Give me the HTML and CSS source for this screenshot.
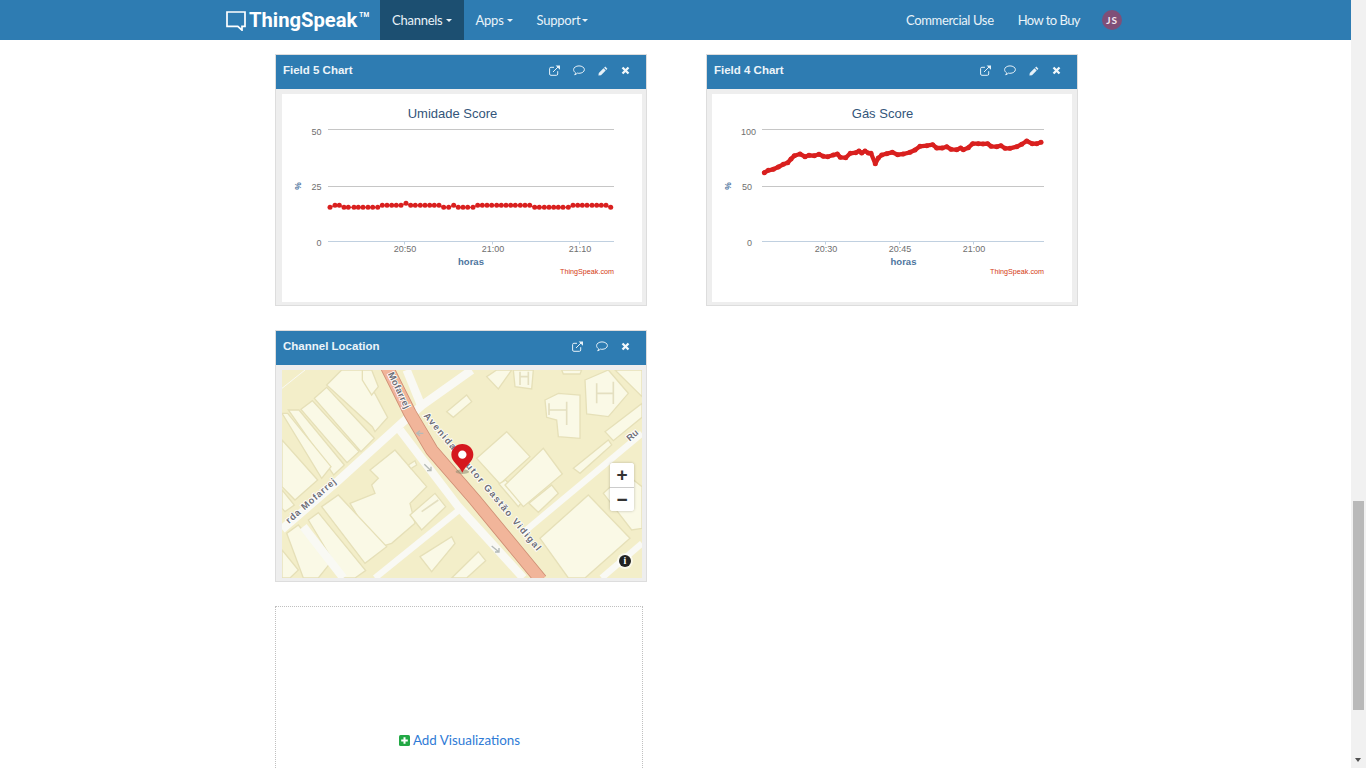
FILE: index.html
```html
<!DOCTYPE html>
<html lang="en">
<head>
<meta charset="utf-8">
<title>ThingSpeak</title>
<link rel="stylesheet" href="styles.css">
</head>
<body>
<svg class="defs" width="0" height="0" aria-hidden="true">
  <defs>
    <marker id="dot" markerUnits="userSpaceOnUse" markerWidth="6" markerHeight="6" refX="3" refY="3"><circle cx="3" cy="3" r="2.500" class="dot"/></marker>
    <symbol id="i-ext" viewBox="0 0 11 11"><path class="ico-s" d="M8.700 6.200V9a1.300 1.300 0 0 1-1.300 1.300H1.900A1.300 1.300 0 0 1 .6 9V3.600a1.300 1.300 0 0 1 1.300-1.300H5"/><path class="ico-s" d="M4 7 9.400 1.600"/><path class="ico-f" d="M6.600.4H11v4.400z"/></symbol>
    <symbol id="i-com" viewBox="0 0 12 11"><path class="ico-s" d="M6 .9c3 0 5.400 1.600 5.400 3.700S9 8.300 6 8.300c-.6 0-1.100 0-1.600-.2C3.500 9 2.500 9.700 1.700 9.800c.5-.6.9-1.300.9-2C1.300 7 .6 5.900.6 4.600.6 2.500 3 .9 6 .9z"/></symbol>
    <symbol id="i-pen" viewBox="0 0 10 10"><path class="ico-f" d="M7.200.6 9.400 2.800 8.300 3.900 6.100 1.700zM5.500 2.300 7.700 4.500 3 9.200.4 9.600.8 7z"/></symbol>
    <symbol id="i-x" viewBox="0 0 9 9"><path class="ico-x" d="M1.500 1.500 7.500 7.500M7.500 1.500 1.500 7.500"/></symbol>
  </defs>
</svg>
<div class="page">
  <header class="navbar">
    <a class="brand">
      <svg class="brand-mark" width="20" height="20" viewBox="0 0 20 20"><path d="M1 1H19V15.300H16V19.200L11.800 15.300H1Z"/></svg>
      <span class="brand-name">ThingSpeak</span><span class="brand-tm">TM</span>
    </a>
    <nav class="nav-left">
      <a class="nav-item active">Channels <i class="caret"></i></a>
      <a class="nav-item">Apps <i class="caret"></i></a>
      <a class="nav-item">Support<i class="caret caret-tight"></i></a>
    </nav>
    <nav class="nav-right">
      <a class="nav-link">Commercial Use</a>
      <a class="nav-link nav-link-tight">How to Buy</a>
      <span class="avatar">JS</span>
    </nav>
  </header>

  <main class="grid">
    <section class="panel">
      <div class="panel-head">
        <h3>Field 5 Chart</h3>
        <div class="tools">
          <svg class="t-ext"><use href="#i-ext"/></svg>
          <svg class="t-com"><use href="#i-com"/></svg>
          <svg class="t-pen"><use href="#i-pen"/></svg>
          <svg class="t-x"><use href="#i-x"/></svg>
        </div>
      </div>
      <div class="panel-body">
        <svg class="chart" viewBox="0 0 360 208">
          <text class="c-title" x="170.500" y="24">Umidade Score</text>
          <path class="grid-line" d="M46 35.500H332M46 92.500H332"/>
          <path class="axis-line" d="M46 147.500H332M122.500 147.500V150.500M210.500 147.500V150.500M297.500 147.500V150.500"/>
          <text class="y-lab" x="39.500" y="41">50</text>
          <text class="y-lab" x="39.500" y="96">25</text>
          <text class="y-lab" x="39.500" y="151.500">0</text>
          <text class="x-lab" x="123" y="158">20:50</text>
          <text class="x-lab" x="211" y="158">21:00</text>
          <text class="x-lab" x="298" y="158">21:10</text>
          <text class="ax-name" x="189" y="171">horas</text>
          <text class="ax-y" transform="translate(19 92) rotate(-90)">%</text>
          <text class="credit" x="332" y="180">ThingSpeak.com</text>
          <polyline class="series dotted" points="48,113.300 53,111.300 57.300,111.300 62,113.300 66.300,113.300 72,113.300 76.300,113.300 81,113.300 86,113.300 90.700,113.300 95.700,113.300 100.300,111.300 105,111.300 109.700,111.300 114.300,111.300 119,111.300 124,109.300 128.700,111.300 133.300,111.300 138.300,111.300 143,111.300 147.700,111.300 152.300,111.300 157,111.300 161.700,113.300 166.700,113.300 171.700,111.300 176.300,113.300 181,113.300 185.700,113.300 191,113.300 195.700,111.300 200.300,111.300 205,111.300 209.700,111.300 214.700,111.300 219.300,111.300 224,111.300 228.700,111.300 233.300,111.300 238.300,111.300 243,111.300 247.700,111.300 252.700,113.300 257.300,113.300 262.300,113.300 267,113.300 271.700,113.300 276.300,113.300 281,113.300 286.300,113.300 291,111.300 295.700,111.300 300.300,111.300 305,111.300 310,111.300 314.700,111.300 319.300,111.300 324,111.300 328.700,113.300"/>
        </svg>
      </div>
    </section>

    <section class="panel">
      <div class="panel-head">
        <h3>Field 4 Chart</h3>
        <div class="tools">
          <svg class="t-ext"><use href="#i-ext"/></svg>
          <svg class="t-com"><use href="#i-com"/></svg>
          <svg class="t-pen"><use href="#i-pen"/></svg>
          <svg class="t-x"><use href="#i-x"/></svg>
        </div>
      </div>
      <div class="panel-body panel-body-tight">
        <svg class="chart" viewBox="0 0 360 208">
          <text class="c-title" x="170.500" y="24">Gás Score</text>
          <path class="grid-line" d="M50 35.500H332M50 92.500H332"/>
          <path class="axis-line" d="M50 147.500H332M113.500 147.500V150.500M187.500 147.500V150.500M261.500 147.500V150.500"/>
          <text class="y-lab" x="44" y="41">100</text>
          <text class="y-lab" x="40" y="96">50</text>
          <text class="y-lab" x="40" y="151.500">0</text>
          <text class="x-lab" x="114" y="158">20:30</text>
          <text class="x-lab" x="188" y="158">20:45</text>
          <text class="x-lab" x="262" y="158">21:00</text>
          <text class="ax-name" x="191.500" y="171">horas</text>
          <text class="ax-y" transform="translate(19 92) rotate(-90)">%</text>
          <text class="credit" x="332" y="180">ThingSpeak.com</text>
          <polyline class="series thick" points="52.300,78.700 56.300,76.300 61.300,75.300 66.300,73 71.300,70.300 75.700,68.700 79,65 82.300,61.700 88,60 93,62.700 97,61.300 102.300,61.700 107,60.300 111.300,62.300 115.700,62.700 121.300,61 125.300,60 128.300,63.300 133.700,63.700 138.300,59.300 143.700,58.700 147,57 149.700,59 153,57 156.300,59 159,59.300 163.300,69.700 166.300,64 169.700,61 174.700,59.700 180.300,58.300 185.700,60.700 191.300,60 198,58.300 203,56 208,52.300 214.700,51.700 220.700,50.700 224.700,54 230.300,54 234.700,52.700 239,55.300 244.700,55.700 248.700,54 251.300,55.700 256.300,53.700 260.700,49.700 266.300,49.700 271,49.900 275.700,49.700 279,52.300 284.700,52.700 289,51.700 293,54.300 298,54.300 304.700,52.700 309.700,50.300 314.700,47 320.300,49.700 324.700,49.700 329,48.300"/>
        </svg>
      </div>
    </section>

    <section class="panel">
      <div class="panel-head">
        <h3>Channel Location</h3>
        <div class="tools">
          <svg class="t-ext"><use href="#i-ext"/></svg>
          <svg class="t-com"><use href="#i-com"/></svg>
          <svg class="t-x"><use href="#i-x"/></svg>
        </div>
      </div>
      <div class="panel-body">
        <div class="map">
          <svg class="map-art" viewBox="21 120 1080 624">
            <rect class="ground" x="21" y="120" width="1080" height="624"/>
            <g class="bld">
              <polygon points="155,165 200,120 262,120 338,262 300,305 292,290"/>
              <polygon points="262,120 290,120 310,170 290,195 262,150"/>
              <polygon points="118,205 155,172 298,325 258,365"/>
              <polygon points="78,238 112,212 252,365 216,398"/>
              <polygon points="40,240 72,240 208,405 176,435"/>
              <polygon points="21,250 38,250 168,410 140,445"/>
              <polygon points="21,330 128,450 60,510 21,470"/>
              <polygon points="21,480 58,525 30,545 21,535"/>
              <polygon points="285,420 360,360 455,470 405,520 420,580 350,640 300,655 255,570 225,520 300,490 290,465 310,445"/>
              <polygon points="400,405 420,392 425,405 408,416"/>
              <polygon points="140,530 190,495 335,650 270,700"/>
              <polygon points="100,570 130,548 272,722 240,744 205,744"/>
              <polygon points="35,610 70,585 165,700 130,744 85,744"/>
              <polygon points="21,660 70,720 45,744 21,744"/>
              <polygon points="405,555 480,490 512,530 440,600"/>
              <polygon points="435,680 530,620 540,640 470,725"/>
              <polygon points="530,744 610,665 632,692 575,744"/>
              <polygon points="605,385 695,305 765,380 675,462"/>
              <polygon points="672,462 692,450 745,510 730,530"/>
              <polygon points="690,465 805,355 862,432 745,530"/>
              <polygon points="762,520 830,465 850,490 790,547"/>
              <polygon points="895,415 1000,330 1010,345 915,430"/>
              <polygon points="795,625 940,495 1065,625 930,744 880,744"/>
              <polygon points="990,305 1101,220 1101,262 1015,332"/>
              <polygon points="985,490 1050,430 1101,470 1101,595 1070,600"/>
              <polygon points="930,150 1000,120 1060,190 1000,260 935,252"/>
              <polygon points="810,210 850,190 915,195 915,325 850,320 845,270 815,262"/>
              <polygon points="515,245 575,195 590,215 535,262"/>
              <polygon points="635,140 665,120 710,120 670,177"/>
              <polygon points="715,120 775,120 770,177 720,170"/>
              <polygon points="860,120 920,120 915,132 865,132"/>
              <polygon points="1020,120 1101,120 1101,200"/>
            </g>
            <g class="h-marks">
              <path d="M965 160V220M1015 155V222M965 190H1015"/>
              <path d="M822 220V255M875 215V285M822 240H875"/>
              <path d="M735 125V165M760 125V165M735 140H760"/>
              <path d="M440 545 490 510"/>
            </g>
            <g class="roads">
              <path class="r24" d="M21 598 190 452 385 275 442 225 590 120"/>
              <path class="r24" d="M395 120 440 230"/>
              <path class="r24" d="M375 300 550 530 745 744"/>
              <path class="r18" d="M300 744 552 540"/>
              <path class="r18" d="M742 610 1101 310"/>
              <path class="r24" d="M85 590 205 744"/>
              <path class="r18" d="M980 744 1101 640"/>
              <path class="r8" d="M21 175 90 120"/>
            </g>
            <path class="main-edge" d="M335 110 405 250 470 360 600 510 798 750"/>
            <path class="main-road" d="M335 110 405 250 470 360 600 510 798 750"/>
            <g class="map-arrows">
              <path d="M448 403 468 422M456 422H468V410"/>
              <path d="M650 648 672 666M660 666H672V654"/>
              <path d="M445 310H425M435 302 425 310 435 318"/>
            </g>
            <g class="map-labels">
              <text transform="translate(445 258) rotate(50)" textLength="530">Avenida Doutor Gastão Vidigal</text>
              <text transform="translate(338 132) rotate(64)" textLength="118">Mofarrej</text>
              <text transform="translate(42 582) rotate(-41)" textLength="190">rda Mofarrej</text>
              <text transform="translate(1064 335) rotate(-40)">Ru</text>
            </g>
            <ellipse class="pin-shadow" cx="562" cy="425" rx="20" ry="7"/>
            <path class="pin" d="M562 428C552 405 529 395 529 374a33 32 0 0 1 66 0C595 395 572 405 562 428Z"/>
            <circle class="pin-eye" cx="562" cy="374" r="12.500"/>
          </svg>
          <div class="zoomer">
            <button class="zoom-btn">+</button>
            <button class="zoom-btn">−</button>
          </div>
          <span class="info">i</span>
        </div>
      </div>
    </section>

    <section class="panel-spacer" aria-hidden="true"></section>

    <section class="add-box">
      <a class="add-link"><svg class="add-ico" viewBox="0 0 11 11"><rect class="add-bg" width="11" height="11" rx="1.500"/><path class="add-plus" d="M5.500 2.200V8.800M2.200 5.500H8.800"/></svg>Add Visualizations</a>
    </section>
  </main>
</div>
<div class="scrollbar"><div class="thumb"></div><div class="arrow"></div></div>
</body>
</html>
```
FILE: styles.css
```css
* { box-sizing: border-box; }
html, body { margin: 0; height: 100%; overflow: hidden; background: #fff; }
body { display: flex; font-family: "Liberation Sans", Arial, sans-serif; }
.defs { position: absolute; }
.page { flex: 1; min-width: 0; height: 100vh; overflow: hidden; }

/* navbar */
.navbar { display: flex; align-items: center; height: 40px; padding: 0 229px 0 225px; background: #2e7cb2; color: #e9f3f9; }
.brand { display: flex; align-items: center; width: 155px; color: #fff; }
.brand-mark { margin: 1px 3px 0 1px; flex: none; }
.brand-mark path { fill: none; stroke: #fff; stroke-width: 1.700; }
.brand-name { font: 700 20.200px Roboto, sans-serif; line-height: 40px; }
.brand-tm { font: 700 6.500px Roboto, sans-serif; margin: -10px 0 0 2px; letter-spacing: .3px; }
.nav-left { display: flex; height: 100%; }
.nav-item { display: flex; align-items: center; padding: 0 12px; font: 400 13px/40px Lato, sans-serif; letter-spacing: -.25px; white-space: pre; }
.nav-item.active { background: #1c4f71; }
.caret { display: inline-block; width: 0; height: 0; border-top: 3.500px solid #e9f3f9; border-left: 3.500px solid transparent; border-right: 3.500px solid transparent; }
.caret-tight { margin-left: 2px; }
.nav-right { display: flex; align-items: center; margin-left: auto; }
.nav-link { font: 400 13px/40px Lato, sans-serif; letter-spacing: -.35px; margin-right: 24px; white-space: nowrap; }
.nav-link-tight { letter-spacing: -.55px; margin-right: 22px; }
.avatar { display: flex; align-items: center; justify-content: center; width: 20px; height: 20px; border-radius: 50%; background: #7f4f78; color: #f4e9f2; font: 700 10px Lato, sans-serif; letter-spacing: .8px; }

/* grid */
.grid { display: grid; grid-template-columns: 372px 372px; grid-auto-rows: 252px; column-gap: 59px; row-gap: 24px; padding: 14px 0 0 275px; }
.panel { display: flex; flex-direction: column; border: 1px solid #ddd; background: #eee; }
.panel-head { display: flex; align-items: flex-start; justify-content: space-between; height: 34px; background: #2e7cb2; padding: 9px 16px 0 7px; flex: none; }
.panel-head h3 { margin: 0; font: 700 11.500px/13px "Liberation Sans", Arial, sans-serif; color: #ecf4f9; }
.tools { display: flex; align-items: center; height: 13px; }
.tools svg { display: block; }
.t-ext { width: 11px; height: 11px; margin-right: 13px; }
.t-com { width: 12px; height: 11px; margin-right: 13px; }
.t-pen { width: 10px; height: 10px; margin-right: 13px; }
.t-x { width: 9px; height: 9px; }
.ico-s { fill: none; stroke: #e6f1f8; stroke-width: 1; }
.ico-f { fill: #e6f1f8; }
.ico-x { fill: none; stroke: #f2f8fb; stroke-width: 2.300; }
.panel-body { flex: 1; min-height: 0; padding: 5px 4px 3px 6px; }
.panel-body-tight { padding-left: 5px; }
.chart { display: block; width: 360px; height: 208px; background: #fff; }

/* chart text */
.c-title { font: 13px "Liberation Sans", Arial, sans-serif; fill: #33557a; text-anchor: middle; }
.grid-line { fill: none; stroke: #c6c6c6; stroke-width: 1; }
.axis-line { fill: none; stroke: #c0d0e0; stroke-width: 1; }
.y-lab { font: 9px "Liberation Sans", Arial, sans-serif; fill: #6f6f6f; text-anchor: end; }
.x-lab { font: 9px "Liberation Sans", Arial, sans-serif; fill: #6f6f6f; text-anchor: middle; }
.ax-name { font: 700 9.500px "Liberation Sans", Arial, sans-serif; fill: #4d759e; text-anchor: middle; }
.ax-y { font: 700 8.500px "Liberation Sans", Arial, sans-serif; fill: #4d759e; text-anchor: middle; }
.credit { font: 7.200px "Liberation Sans", Arial, sans-serif; fill: #d43a10; text-anchor: end; }
.series { fill: none; stroke: #d9201f; stroke-linejoin: round; stroke-linecap: round; marker-start: url(#dot); marker-mid: url(#dot); marker-end: url(#dot); }
.series.dotted { stroke-width: 1; }
.series.thick { stroke-width: 4.300; }
.dot { fill: #d9201f; }

/* map */
.map { position: relative; width: 360px; height: 208px; overflow: hidden; }
.map-art { display: block; width: 360px; height: 208px; }
.ground { fill: #f3eec9; }
.bld polygon { fill: #faf9e6; stroke: #e6e0b8; stroke-width: 4; }
.h-marks path { fill: none; stroke: #e4dfc0; stroke-width: 5; }
.roads path { fill: none; stroke: #f9f9f4; }
.r24 { stroke-width: 25; }
.r18 { stroke-width: 19; }
.r8 { stroke-width: 3; }
.main-edge { fill: none; stroke: #cf8f75; stroke-width: 40; }
.main-road { fill: none; stroke: #f1b59a; stroke-width: 35; }
.map-arrows path { fill: none; stroke: #b4bab8; stroke-width: 4; }
.map-labels text { font: 700 28px "Liberation Sans", Arial, sans-serif; fill: #6f6f78; stroke: #fff; stroke-width: 5; paint-order: stroke; }
.pin-shadow { fill: #8a8a70; opacity: .55; }
.pin { fill: #d5171e; }
.pin-eye { fill: #fff; }
.zoomer { position: absolute; top: 93px; left: 328px; display: flex; flex-direction: column; width: 24px; border-radius: 3px; background: #fff; box-shadow: 0 0 3px rgba(0,0,0,.25); overflow: hidden; }
.zoom-btn { display: block; width: 24px; height: 24px; margin: 0; padding: 0; border: 0; background: #fff; color: #333; font: 700 19px/22px "Liberation Sans", Arial, sans-serif; }
.zoom-btn + .zoom-btn { border-top: 1px solid #ccc; }
.info { position: absolute; left: 337px; top: 185px; width: 12px; height: 12px; border-radius: 50%; background: #222; color: #fff; font: 700 10px/12px "Liberation Serif", serif; text-align: center; box-shadow: 0 0 0 2px rgba(255,255,255,.6); }

/* add box */
.panel-spacer { visibility: hidden; }
.add-box { display: flex; align-items: center; justify-content: center; width: 368px; height: 268px; border: 1px dotted #c0c0c0; }
.add-link { display: flex; align-items: center; padding-left: 1px; font: 400 13.400px Lato, sans-serif; color: #2f7bd6; }
.add-ico { width: 11px; height: 11px; margin-right: 3px; flex: none; }
.add-bg { fill: #22a845; }
.add-plus { fill: none; stroke: #fff; stroke-width: 2; }

/* window scrollbar */
.scrollbar { position: relative; flex: none; width: 15px; height: 100vh; background: #f1f1f1; }
.thumb { position: absolute; top: 501px; left: 2px; width: 11px; height: 209px; background: #b9b9b9; }
.arrow { position: absolute; top: 758px; left: 4px; width: 0; height: 0; border-top: 4px solid #505050; border-left: 3.500px solid transparent; border-right: 3.500px solid transparent; }
```
